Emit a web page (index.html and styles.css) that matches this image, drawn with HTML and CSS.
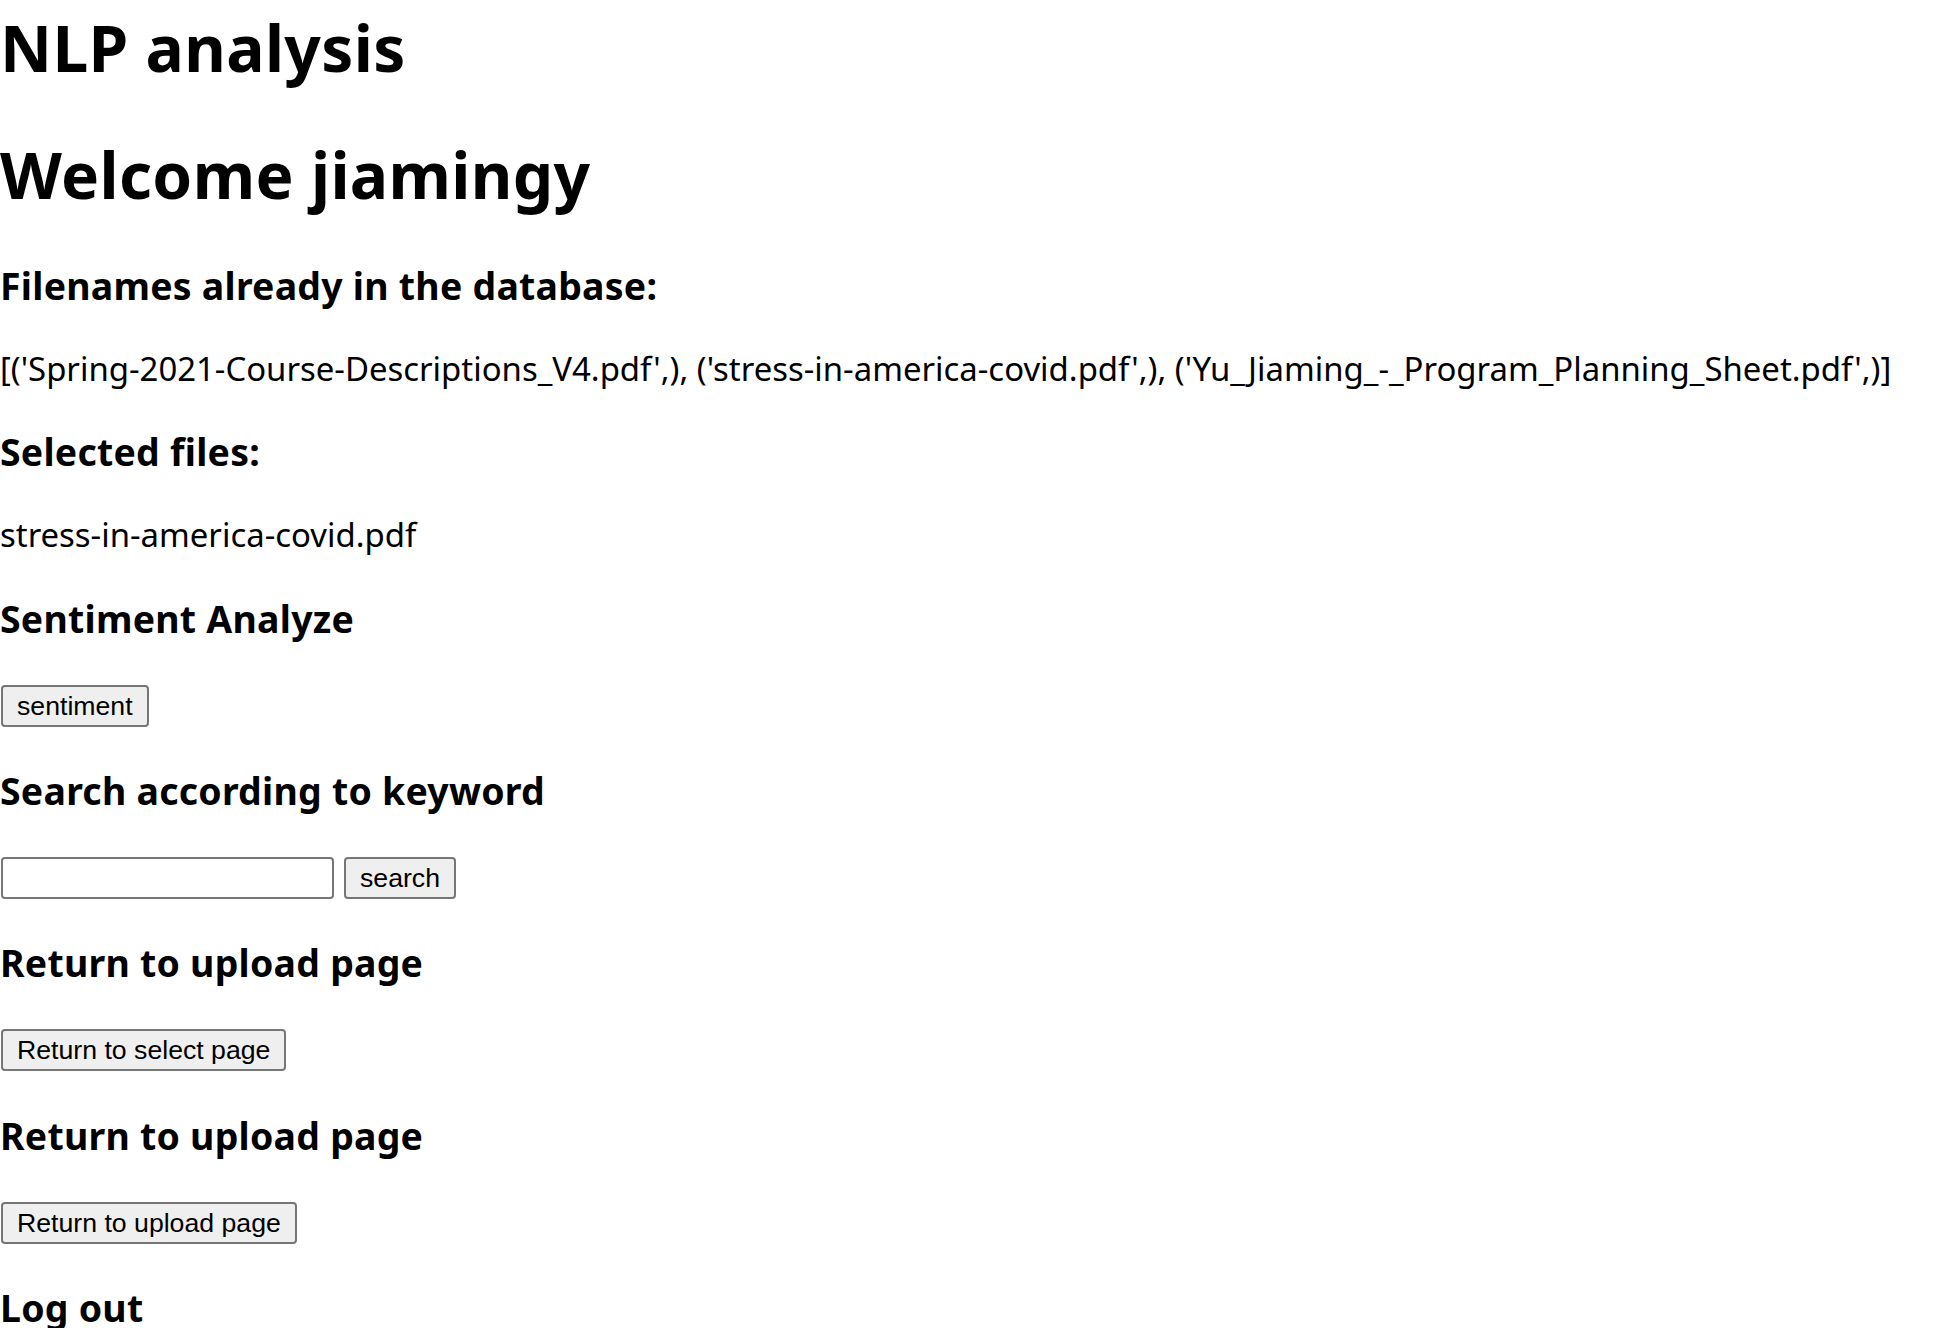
FILE: index.html
```html
<!DOCTYPE html>
<html lang="en">
<head>
<meta charset="utf-8">
<title>NLP analysis</title>
<link rel="stylesheet" href="styles.css">
</head>
<body>
<h1 class="title first">NLP analysis</h1>
<h1 class="title">Welcome jiamingy</h1>

<h3 class="section">Filenames already in the database:</h3>
<p class="text">[('Spring-2021-Course-Descriptions_V4.pdf',), ('stress-in-america-covid.pdf',), ('Yu_Jiaming_-_Program_Planning_Sheet.pdf',)]</p>

<h3 class="section">Selected files:</h3>
<p class="text">stress-in-america-covid.pdf</p>

<h3 class="section">Sentiment Analyze</h3>
<form class="actions">
  <button type="button" class="btn">sentiment</button>
</form>

<h3 class="section">Search according to keyword</h3>
<form class="actions">
  <input type="text" class="field">
  <button type="button" class="btn">search</button>
</form>

<h3 class="section">Return to upload page</h3>
<form class="actions">
  <button type="button" class="btn">Return to select page</button>
</form>

<h3 class="section">Return to upload page</h3>
<form class="actions">
  <button type="button" class="btn">Return to upload page</button>
</form>

<h3 class="section">Log out</h3>
</body>
</html>
```
FILE: styles.css
```css
html, body {
  background: #ffffff;
}

body {
  margin: 0;
  color: #000000;
  font-family: "Noto Sans", "Open Sans", sans-serif;
  font-size: 32px;
  line-height: 1.32;
}

.title {
  font-size: 64px;
  font-weight: 700;
  line-height: 84.48px;
  letter-spacing: 0.35px;
  margin: 42.88px 0;
}

.title.first {
  margin-top: 6px;
}

.section {
  font-size: 37.44px;
  font-weight: 700;
  line-height: 49.42px;
  letter-spacing: 0.25px;
  margin: 37.44px 0;
}

.text {
  font-size: 32.9px;
  line-height: 42.24px;
  margin: 32px 0;
  white-space: nowrap;
}

.actions {
  display: flex;
  align-items: flex-start;
  gap: 10px;
  margin: 0 0 0 1px;
  padding: 4px 0 2px;
}

.btn {
  box-sizing: border-box;
  height: 42px;
  margin: 0;
  padding: 4px 14px;
  border: 2px solid #767676;
  border-radius: 4px;
  background: #efefef;
  color: #000000;
  font-family: "Liberation Sans", Arial, sans-serif;
  font-size: 26.67px;
  line-height: 30px;
}

.field {
  box-sizing: border-box;
  width: 333px;
  height: 42px;
  margin: 0;
  padding: 2px 4px;
  border: 2px solid #767676;
  border-radius: 4px;
  background: #ffffff;
  font-family: "Liberation Sans", Arial, sans-serif;
  font-size: 26.67px;
}
```
